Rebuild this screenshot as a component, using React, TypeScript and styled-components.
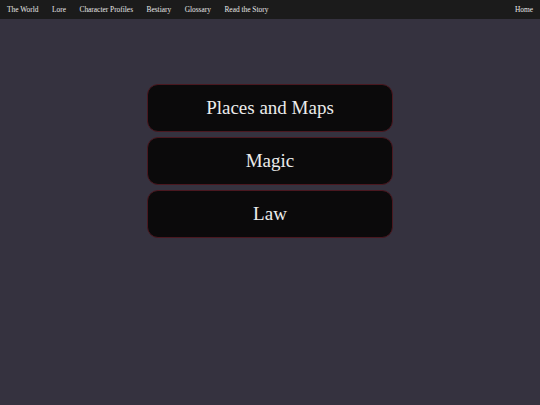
import React from "react";
import styled, { createGlobalStyle } from "styled-components";

const Global = createGlobalStyle`
  html, body { margin: 0; padding: 0; }
  body {
    background: #35323f;
    font-family: "Liberation Serif", "Times New Roman", serif;
    min-height: 405px;
  }
`;

const NavBar = styled.nav`
  height: 19px;
  background: #1b1b1b;
  display: flex;
  align-items: center;
  justify-content: space-between;
  padding: 0 7px;
  box-sizing: border-box;
`;

const NavGroup = styled.div`
  display: flex;
  align-items: center;
  gap: 13.5px;
`;

const NavLink = styled.a`
  color: #e6e6e6;
  font-family: "Liberation Serif", "Times New Roman", serif;
  font-size: 7.4px;
  text-decoration: none;
  white-space: nowrap;
`;

const Main = styled.main`
  display: flex;
  flex-direction: column;
  align-items: center;
  gap: 5px;
  padding-top: 65px;
`;

const Tile = styled.div`
  width: 246px;
  height: 48px;
  background: #0b0a0b;
  border: 1px solid #4a1820;
  border-radius: 11px;
  color: #ececec;
  font-family: "Liberation Serif", "Times New Roman", serif;
  font-size: 19px;
  display: flex;
  align-items: center;
  justify-content: center;
  box-sizing: border-box;
  padding: 0 0 1px;
  cursor: pointer;
`;

const links = ["The World", "Lore", "Character Profiles", "Bestiary", "Glossary", "Read the Story"];
const tiles = ["Places and Maps", "Magic", "Law"];

export default function App() {
  return (
    <>
      <Global />
      <NavBar>
        <NavGroup>
          {links.map((l) => (
            <NavLink key={l} href="#">{l}</NavLink>
          ))}
        </NavGroup>
        <NavLink href="#">Home</NavLink>
      </NavBar>
      <Main>
        {tiles.map((t) => (
          <Tile key={t} role="button">{t}</Tile>
        ))}
      </Main>
    </>
  );
}
